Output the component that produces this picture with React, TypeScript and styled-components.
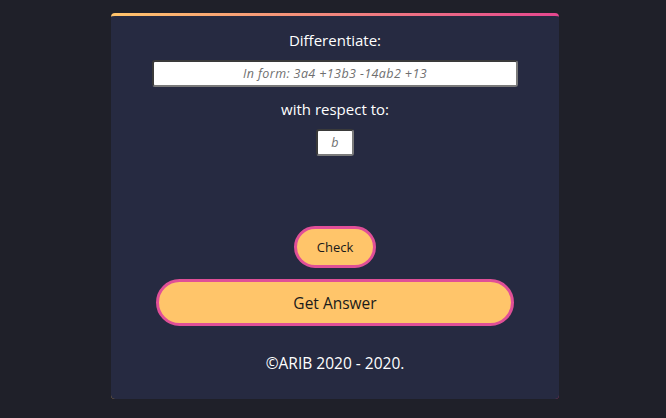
import React from "react";
import styled, { createGlobalStyle } from "styled-components";

const Global = createGlobalStyle`
  html, body { margin: 0; padding: 0; background: #1f2029; }
  body { font-family: "Open Sans", "Noto Sans", sans-serif; }
`;

const Page = styled.div`
  width: 666px;
  height: 418px;
  display: flex;
  justify-content: center;
  padding-left: 4px;
  box-sizing: border-box;
`;

const Card = styled.div`
  margin-top: 13px;
  width: 448px;
  height: 386px;
  box-sizing: border-box;
  background: #262a41;
  border-radius: 4px;
  border-top: 3px solid transparent;
  background-image: linear-gradient(#262a41, #262a41), linear-gradient(90deg, #ffc46b, #e4478f);
  background-origin: border-box;
  background-clip: padding-box, border-box;
  display: flex;
  flex-direction: column;
  align-items: center;
  padding-top: 13px;
  color: #ffffff;
`;

const Label = styled.div<{ $mt?: number }>`
  font-size: 15px;
  line-height: 22px;
  margin-top: ${(p) => p.$mt ?? 0}px;
`;

const Input = styled.input<{ $w: number; $h?: number; $mt: number }>`
  width: ${(p) => p.$w}px;
  height: ${(p) => p.$h ?? 27}px;
  margin-top: ${(p) => p.$mt}px;
  box-sizing: border-box;
  background: #ffffff;
  border: 2px solid #7a7a7a;
  border-top-color: #3a3a3a;
  border-left-color: #3a3a3a;
  border-radius: 3px;
  text-align: center;
  font-family: "Open Sans", sans-serif;
  font-style: italic;
  font-size: 12.5px;
  letter-spacing: 0.4px;
  padding: 0;
  &::placeholder { color: #6f6f6f; }
`;

const Pill = styled.button<{ $w: number; $h: number; $fs: number; $mt: number }>`
  width: ${(p) => p.$w}px;
  height: ${(p) => p.$h}px;
  margin-top: ${(p) => p.$mt}px;
  box-sizing: border-box;
  border: 3px solid #e04f97;
  border-radius: 999px;
  background: #ffc56a;
  color: #1a1a1a;
  font-family: "Open Sans", sans-serif;
  font-size: ${(p) => p.$fs}px;
  padding: 0;
  cursor: pointer;
`;

const Footer = styled.div`
  margin-top: 26px;
  font-size: 15.5px;
  line-height: 22px;
`;

export default function App() {
  return (
    <>
      <Global />
      <Page>
        <Card>
          <Label>Differentiate:</Label>
          <Input $w={366} $mt={9} placeholder="In form: 3a4 +13b3 -14ab2 +13" />
          <Label $mt={11}>with respect to:</Label>
          <Input $w={38} $mt={9} placeholder="b" />
          <Pill $w={82} $h={42} $fs={13} $mt={70}>Check</Pill>
          <Pill $w={358} $h={47} $fs={15.5} $mt={11}>Get Answer</Pill>
          <Footer>©ARIB 2020 - 2020.</Footer>
        </Card>
      </Page>
    </>
  );
}
